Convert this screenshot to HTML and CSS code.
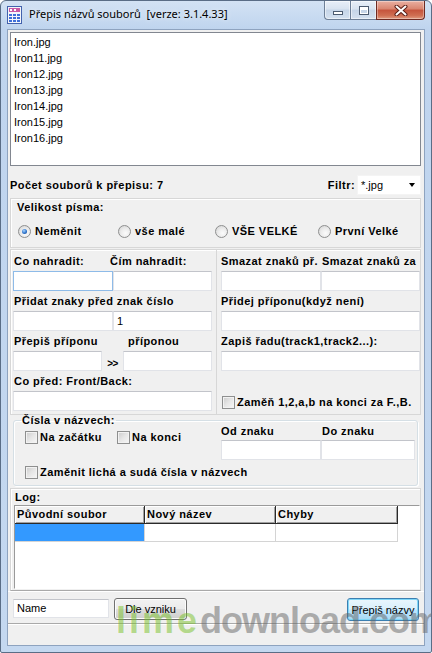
FILE: index.html
```html
<!DOCTYPE html>
<html lang="cs">
<head>
<meta charset="utf-8">
<title>Přepis názvů souborů</title>
<link rel="stylesheet" href="styles.css">
</head>
<body>
<div class="window">
  <div class="titlebar">
    <svg class="appicon" width="15" height="18" viewBox="0 0 15 18">
      <rect x="0.5" y="0.5" width="14" height="17" fill="#f4f6fb" stroke="#4262ad"/>
      <rect x="2" y="2" width="11" height="4" fill="#c95aa6"/>
      <rect x="3" y="3" width="2" height="2" fill="#fff"/>
      <rect x="7" y="3" width="2" height="2" fill="#fff"/>
      <g fill="#3f6fd8">
        <rect x="2" y="8" width="3" height="2"/><rect x="6" y="8" width="3" height="2"/><rect x="10" y="8" width="3" height="2"/>
        <rect x="2" y="11" width="3" height="2"/><rect x="6" y="11" width="3" height="2"/><rect x="10" y="11" width="3" height="2"/>
        <rect x="2" y="14" width="3" height="2"/><rect x="6" y="14" width="3" height="2"/><rect x="10" y="14" width="3" height="2"/>
      </g>
    </svg>
    <div class="title">Přepis názvů souborů&nbsp; [verze: 3.1.4.33]</div>
    <div class="caption">
      <div class="cbtn cmin"><span class="g-min"></span></div>
      <div class="cbtn cmax"><span class="g-max"></span></div>
      <div class="cbtn cclose">
        <svg width="14" height="11" viewBox="0 0 14 11">
          <path d="M2.5 1.5 L11.5 9.5 M11.5 1.5 L2.5 9.5" stroke="#5a1e16" stroke-width="4" stroke-linecap="round"/>
          <path d="M2.5 1.5 L11.5 9.5 M11.5 1.5 L2.5 9.5" stroke="#fff" stroke-width="2" stroke-linecap="round"/>
        </svg>
      </div>
    </div>
  </div>
  <div class="client">
    <div class="filelist">
      <div class="item">Iron.jpg</div>
      <div class="item">Iron11.jpg</div>
      <div class="item">Iron12.jpg</div>
      <div class="item">Iron13.jpg</div>
      <div class="item">Iron14.jpg</div>
      <div class="item">Iron15.jpg</div>
      <div class="item">Iron16.jpg</div>
    </div>
    <div class="countrow">
      <span>Počet souborů k přepisu: 7</span>
      <div class="filter">
        <span>Filtr:</span>
        <div class="combo"><span>*.jpg</span><span class="arrow"></span></div>
      </div>
    </div>
    <div class="panel sizepanel">
      <div class="plabel">Velikost písma:</div>
      <div class="radios">
        <div class="radio r1"><span class="rb on"></span><span>Neměnit</span></div>
        <div class="radio r2"><span class="rb"></span><span>vše malé</span></div>
        <div class="radio r3"><span class="rb"></span><span>VŠE VELKÉ</span></div>
        <div class="radio r4"><span class="rb"></span><span>První Velké</span></div>
      </div>
    </div>
    <div class="mid">
      <div class="panel lpanel">
        <div class="lrow"><span class="w96">Co nahradit:</span><span>Čím nahradit:</span></div>
        <div class="irow"><div class="tb w100 focus"></div><div class="tb w99"></div></div>
        <div class="lrow"><span>Přidat znaky před znak číslo</span></div>
        <div class="irow"><div class="tb w100"></div><div class="tb w99">1</div></div>
        <div class="lrow"><span class="w114">Přepiš příponu</span><span>příponou</span></div>
        <div class="irow"><div class="tb w89"></div><span class="arrows">&gt;&gt;</span><div class="tb w89"></div></div>
        <div class="lrow"><span>Co před: Front/Back:</span></div>
        <div class="irow"><div class="tb w199"></div></div>
      </div>
      <div class="panel rpanel">
        <div class="lrow"><span class="w101">Smazat znaků př.</span><span>Smazat znaků za</span></div>
        <div class="irow"><div class="tb w100"></div><div class="tb w99"></div></div>
        <div class="lrow"><span>Přidej příponu(když není)</span></div>
        <div class="irow"><div class="tb w199"></div></div>
        <div class="lrow"><span>Zapiš řadu(track1,track2...):</span></div>
        <div class="irow"><div class="tb w199"></div></div>
        <div class="chk chk-swap"><span class="cb"></span><span>Zaměň 1,2,a,b na konci za F.,B.</span></div>
      </div>
    </div>
    <fieldset class="numbers">
      <legend>Čísla v názvech:</legend>
      <div class="ncontent">
        <div class="ncol1">
          <div class="chkline">
            <div class="chk w92"><span class="cb"></span><span>Na začátku</span></div>
            <div class="chk"><span class="cb"></span><span>Na konci</span></div>
          </div>
          <div class="chk chk-odd"><span class="cb"></span><span>Zaměnit lichá a sudá čísla v názvech</span></div>
        </div>
        <div class="ncol2">
          <div class="slabel"><span class="w101">Od znaku</span><span>Do znaku</span></div>
          <div class="irow ir-od"><div class="tb w100"></div><div class="tb w94"></div></div>
        </div>
      </div>
    </fieldset>
    <div class="panel log">
      <div class="plabel">Log:</div>
      <div class="listview">
        <div class="thead">
          <div class="th c1">Původní soubor</div>
          <div class="th c2">Nový název</div>
          <div class="th c3">Chyby</div>
        </div>
        <div class="trow">
          <div class="td c1 sel"></div>
          <div class="td c2"></div>
          <div class="td c3"></div>
        </div>
      </div>
    </div>
    <div class="bottom">
      <div class="tb name">Name</div>
      <div class="btn dle">Dle vzniku</div>
      <div class="btn btn-default go">Přepiš názvy</div>
    </div>
    <div class="status"></div>
  </div>
  <div class="watermark"><span class="wm-lime">lime</span><span class="wm-rest">download.com</span></div>
</div>
</body>
</html>
```

FILE: styles.css
```css
* { box-sizing: border-box; margin: 0; padding: 0; }
html, body { width: 432px; height: 653px; overflow: hidden; background: #fff; }
body { font-family: "Liberation Sans", Arial, sans-serif; font-size: 11px; color: #000; }

.window {
  position: relative;
  width: 432px;
  height: 653px;
  display: flex;
  flex-direction: column;
  padding: 0 7px 7px;
  border: 1px solid #5a6d86;
  border-radius: 6px 6px 2px 2px;
  background: linear-gradient(180deg, #d3e2f4 0, #bfd4ee 28px, #c4d8f0 100%);
  overflow: hidden;
}

/* title bar */
.titlebar { height: 29px; margin: 0 -7px; display: flex; align-items: flex-start; padding-left: 6px; }
.appicon { margin-top: 5px; flex: none; }
.title {
  margin-left: 7px; margin-top: 5px;
  font-family: "Noto Sans", "Liberation Sans", sans-serif;
  font-size: 11px; line-height: 16px; color: #000;
  white-space: nowrap;
  text-shadow: 0 0 5px rgba(255,255,255,0.9);
}
.caption { margin-left: auto; margin-right: 6px; display: flex; height: 19px; }
.cbtn { height: 19px; display: flex; align-items: center; justify-content: center; border: 1px solid #6d7f97; border-top: none; }
.cmin, .cmax { width: 26px; border-right: none;
  background: linear-gradient(180deg, #e8eff8 0, #d8e3f0 45%, #c6d5e8 50%, #d4e1f0 100%);
  box-shadow: inset 0 0 0 1px rgba(255,255,255,0.5); }
.cmin { border-radius: 0 0 0 4px; }
.cclose { width: 49px; border-color: #6e2a22; border-radius: 0 0 4px 0;
  background: linear-gradient(180deg, #eab0a2 0, #d9846f 45%, #c5533c 50%, #cf6e52 80%, #e09a80 100%);
  box-shadow: inset 0 0 0 1px rgba(255,255,255,0.35); }
.g-min { width: 10px; height: 4px; background: #fff; border: 1px solid #4c5b70; margin-top: 5px; }
.g-max { width: 10px; height: 9px; border: 1px solid #4c5b70; box-shadow: inset 0 0 0 1px #fff, inset 0 2px 0 1px #fff; background: transparent; }

/* client */
.client {
  flex: 1;
  display: flex;
  flex-direction: column;
  background: #f0f0f0;
  box-shadow: 0 0 0 1px #8ea3bf;
  font-weight: bold;
  letter-spacing: 0.45px;
}

.filelist {
  margin: 2px 3px 0 2px;
  height: 134px;
  background: #fff;
  border: 1px solid #828790;
  padding: 1px 3px;
  line-height: 16px;
  font-weight: normal;
  letter-spacing: 0;
}

.countrow { margin: 9px 3px 0 2px; height: 20px; display: flex; align-items: center; justify-content: space-between; white-space: nowrap; }
.filter { display: flex; align-items: center; }
.combo {
  margin-left: 2px; width: 64px; height: 20px; background: #fff;
  border: 1px solid #f4f4f4;
  display: flex; align-items: center; padding-left: 3px;
  font-weight: normal; letter-spacing: 0;
}
.arrow { margin-left: auto; margin-right: 5px; width: 0; height: 0;
  border-left: 3.5px solid transparent; border-right: 3.5px solid transparent; border-top: 4px solid #000; }

.panel { border: 1px solid #d7d7d7; box-shadow: inset 1px 1px 0 #fff; }

.sizepanel { margin: 3px 3px 0 2px; height: 50px; padding: 1px 0 0 6px; }
.plabel { line-height: 14px; }
.radios { display: flex; margin-top: 9px; height: 16px; align-items: center; padding-left: 1px; white-space: nowrap; }
.radio { display: flex; align-items: center; flex: none; }
.r1 { width: 100px; } .r2 { width: 97px; } .r3 { width: 103px; }
.rb {
  position: relative; flex: none;
  width: 13px; height: 13px; border-radius: 50%;
  border: 1px solid #8e8f8f;
  background: radial-gradient(circle at 60% 65%, #fbfbfb 0, #ececec 45%, #cfcfcf 100%);
  margin-right: 4px;
}
.rb.on::after {
  content: ""; position: absolute; left: 3px; top: 3px; width: 5px; height: 5px; border-radius: 50%;
  background: radial-gradient(circle at 40% 35%, #a6d4ff 0, #2f74cc 55%, #123f85 100%);
}

.mid { display: flex; margin: 1px 3px 0 2px; height: 166px; }
.lpanel { width: 207px; padding: 1px 0 0 2px; flex: none; }
.rpanel { flex: 1; padding: 1px 0 0 4px; border-left: none; box-shadow: inset 0 1px 0 #fff; }
.lpanel .lrow { padding-left: 1px; }

.lrow { height: 20px; display: flex; align-items: center; white-space: nowrap; }
.irow { height: 20px; display: flex; align-items: center; }
.w96 { width: 96px; flex: none; }
.w101 { width: 101px; flex: none; }
.w114 { width: 114px; flex: none; }
.w92 { width: 92px; flex: none; }

.tb {
  height: 20px; flex: none;
  background: #fff;
  border: 1px solid #e1e3e8; border-top-color: #c2c4ca;
  padding-left: 3px; line-height: 18px;
  font-weight: normal; letter-spacing: 0; white-space: nowrap;
}
.tb.focus { border-color: #8ebbe8; }
.w100 { width: 100px; } .w99 { width: 99px; } .w89 { width: 89px; } .w199 { width: 199px; } .w94 { width: 94px; }
.arrows { width: 21px; flex: none; text-align: center; font-size: 10px; letter-spacing: -0.5px; padding-top: 4px; }

.chk { display: flex; align-items: center; height: 20px; white-space: nowrap; }
.cb {
  flex: none; width: 13px; height: 13px; margin-right: 2px;
  border: 1px solid #8e8f8f;
  background: linear-gradient(135deg, #cbcbcb 0, #e6e6e6 50%, #f7f7f7 100%);
  box-shadow: inset 0 0 0 1px #f2f2f2;
}
.chk-swap { margin-top: 21px; padding-left: 1px; }

.numbers {
  margin: -1px 6px 0 5px; height: 72px;
  border: 1px solid #d5dfe5; border-radius: 3px;
  padding: 0 0 0 7px;
  box-shadow: inset 1px 1px 0 #fff, 1px 1px 0 #fff;
}
.numbers legend { padding: 0 1px; line-height: 13px; }
.ncontent { display: flex; margin-left: -7px; }
.ncol1 { width: 207px; flex: none; padding-left: 11px; }
.chkline { display: flex; }
.chk-odd { margin-top: 15px; }
.ncol2 { flex: 1; }
.slabel { display: flex; height: 13px; line-height: 13px; margin-top: -2px; white-space: nowrap; }
.ir-od { margin-top: 2px; }

.log { margin: 2px 3px 0 2px; height: 103px; padding: 1px 0 0 4px; border-bottom-color: #a9a9a9; }
.listview {
  margin: 1px 0 0 -1px; height: 84px; background: #fff;
  border: 1px solid #fff; border-top-color: #9a9a9a; border-left-color: #9a9a9a;
}
.thead, .trow { display: flex; }
.c1 { width: 130px; } .c2 { width: 131px; } .c3 { width: 122px; }
.th {
  height: 18px; padding-left: 2px; line-height: 16px; white-space: nowrap;
  background: #f0f0f0;
  border-right: 1px solid #2a2a2a; border-bottom: 1px solid #2a2a2a;
  box-shadow: inset 1px 1px 0 #fff, inset -1px -1px 0 #a0a0a0;
}
.td { height: 18px; border-right: 1px solid #d4d4d4; border-bottom: 1px solid #d4d4d4; }
.td.sel { background: #3399ff; }

.bottom {
  height: 33px; display: flex; align-items: flex-start;
  padding: 7px 5px 0 5px;
  border-bottom: 1px solid #a9a9a9; box-shadow: 0 1px 0 #fff;
  border-top: 1px solid #fff;
}
.tb.name { width: 96px; height: 19px; margin-top: 0; line-height: 17px; }
.btn {
  height: 22px; display: flex; align-items: center; justify-content: center;
  border: 1px solid #707070; border-radius: 3px;
  background: linear-gradient(180deg, #f2f2f2 0, #ebebeb 48%, #dddddd 52%, #cfcfcf 100%);
  box-shadow: inset 0 0 0 1px #fcfcfc;
  font-weight: normal; letter-spacing: 0; white-space: nowrap;
}
.dle { width: 73px; margin-left: 5px; margin-top: -1px; }
.go { width: 72px; height: 23px; margin-left: auto; margin-top: -1px; }
.btn-default {
  border-color: #3c7fb1;
  background: linear-gradient(180deg, #eaf6fd 0, #d9f0fc 48%, #bee6fd 52%, #a7d9f5 100%);
  box-shadow: inset 0 0 0 1px #7fd6f7;
}
.status { flex: 1; }

.watermark {
  position: absolute; left: 115px; top: 600px;
  font-family: "Liberation Sans", Arial, sans-serif; font-weight: bold; font-size: 36px; line-height: 40px;
  white-space: nowrap; pointer-events: none;
}
.wm-lime { color: rgba(120, 192, 40, 0.5); letter-spacing: 3px; }
.wm-rest { color: rgba(100, 100, 100, 0.5); letter-spacing: -1px; }
```
